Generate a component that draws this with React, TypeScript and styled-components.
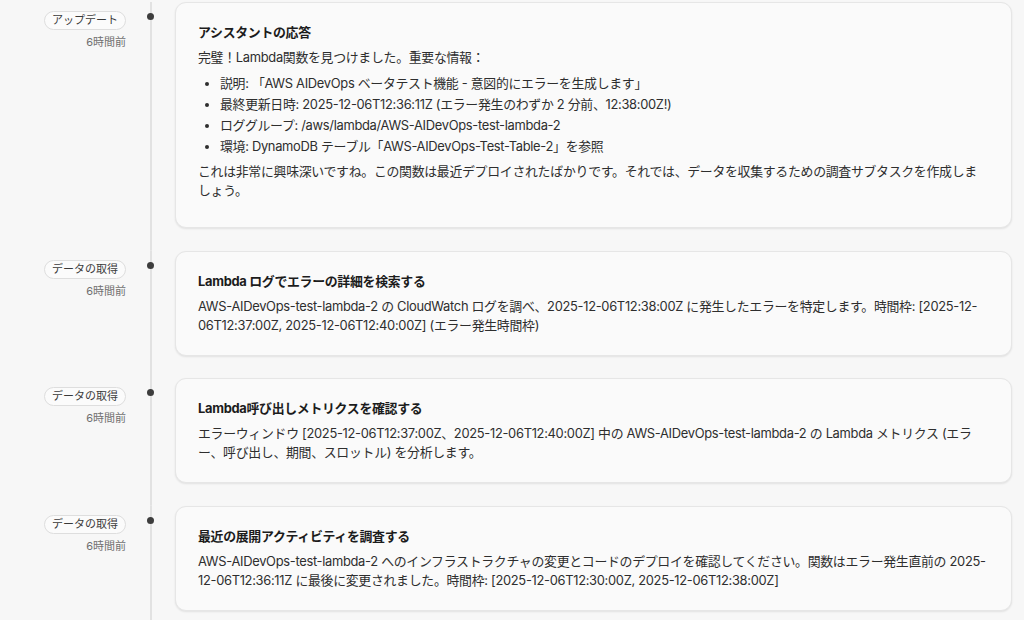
import React from "react"
import styled, { createGlobalStyle } from "styled-components"

const GlobalStyle = createGlobalStyle`
  html, body {
    margin: 0;
    padding: 0;
    background: #f7f7f7;
  }
  body {
    font-family: Inter, "Noto Sans CJK JP", sans-serif;
    color: #2b2b2b;
    -webkit-font-smoothing: antialiased;
  }
`

const Timeline = styled.div`
  display: flex;
  flex-direction: column;
  padding: 2px 12px 0 0;
  min-height: 620px;
  box-sizing: border-box;
`

const Row = styled.div`
  display: flex;
  align-items: stretch;
`

const Meta = styled.div`
  width: 126px;
  flex-shrink: 0;
  display: flex;
  flex-direction: column;
  align-items: flex-end;
  padding-top: 9px;
  box-sizing: border-box;
`

const Badge = styled.span`
  display: inline-block;
  height: 19px;
  line-height: 17px;
  padding: 0 7px;
  box-sizing: border-box;
  border: 1px solid #dedede;
  border-radius: 10px;
  background: #fbfbfb;
  font-size: 11px;
  color: #3a3a3a;
  white-space: nowrap;
`

const Time = styled.span`
  margin-top: 4px;
  font-size: 11px;
  line-height: 16px;
  color: #707070;
`

const Rail = styled.div`
  width: 49px;
  flex-shrink: 0;
  display: flex;
  justify-content: center;
  background: linear-gradient(#e2e2e2, #e2e2e2) center / 2px 100% no-repeat;
`

const Dot = styled.span`
  width: 7px;
  height: 7px;
  margin-top: 11px;
  border-radius: 50%;
  background: #3d3d3d;
`

const CardSlot = styled.div`
  flex: 1;
  padding-bottom: 22.5px;
`

// CJK glyphs run a touch wider than Inter's latin in the source, hence the size/tracking pair
const Card = styled.div`
  background: #fafafa;
  border: 1px solid #e6e6e6;
  border-radius: 11px;
  box-shadow: 0 1px 2px rgba(0, 0, 0, 0.09);
  padding: 20px 22px;
  font-size: 12.9px;
  letter-spacing: -0.3px;
  line-height: 19px;
  line-break: loose;
  color: #2e2e2e;
`

const Title = styled.div`
  font-weight: bold;
  line-height: 20px;
  color: #1c1c1c;
  margin-bottom: 5px;
`

const Paragraph = styled.p`
  margin: 0 0 7px;
`

const Description = styled.p`
  margin: 0;
`

const Bullets = styled.ul`
  margin: 0 0 6px;
  padding-left: 22px;
  list-style: disc;

  li {
    margin-bottom: 2px;
  }
  li:last-child {
    margin-bottom: 0;
  }
`

type Step = {
  badge: string
  time: string
  title: string
  body: React.ReactNode
}

const steps: Step[] = [
  {
    badge: "アップデート",
    time: "6時間前",
    title: "アシスタントの応答",
    body: (
      <>
        <Paragraph>完璧！Lambda関数を見つけました。重要な情報：</Paragraph>
        <Bullets>
          <li>説明: 「AWS AIDevOps ベータテスト機能 - 意図的にエラーを生成します」</li>
          <li>最終更新日時: 2025-12-06T12:36:11Z (エラー発生のわずか 2 分前、12:38:00Z!)</li>
          <li>ロググループ: /aws/lambda/AWS-AIDevOps-test-lambda-2</li>
          <li>環境: DynamoDB テーブル「AWS-AIDevOps-Test-Table-2」を参照</li>
        </Bullets>
        <Paragraph>
          これは非常に興味深いですね。この関数は最近デプロイされたばかりです。それでは、データを収集するための調査サブタスクを作成しましょう。
        </Paragraph>
      </>
    ),
  },
  {
    badge: "データの取得",
    time: "6時間前",
    title: "Lambda ログでエラーの詳細を検索する",
    body: (
      <Description>
        AWS-AIDevOps-test-lambda-2 の CloudWatch ログを調べ、2025-12-06T12:38:00Z
        に発生したエラーを特定します。時間枠: [2025-12-06T12:37:00Z, 2025-12-06T12:40:00Z]
        (エラー発生時間枠)
      </Description>
    ),
  },
  {
    badge: "データの取得",
    time: "6時間前",
    title: "Lambda呼び出しメトリクスを確認する",
    body: (
      <Description>
        エラーウィンドウ [2025-12-06T12:37:00Z、2025-12-06T12:40:00Z] 中の
        AWS-AIDevOps-test-lambda-2 の Lambda メトリクス (エラー、呼び出し、期間、スロットル)
        を分析します。
      </Description>
    ),
  },
  {
    badge: "データの取得",
    time: "6時間前",
    title: "最近の展開アクティビティを調査する",
    body: (
      <Description>
        AWS-AIDevOps-test-lambda-2
        へのインフラストラクチャの変更とコードのデプロイを確認してください。関数はエラー発生直前の
        2025-12-06T12:36:11Z に最後に変更されました。時間枠: [2025-12-06T12:30:00Z,
        2025-12-06T12:38:00Z]
      </Description>
    ),
  },
]

export default function App() {
  return (
    <>
      <GlobalStyle />
      <Timeline lang="ja">
        {steps.map((step, i) => (
          <Row key={i}>
            <Meta>
              <Badge>{step.badge}</Badge>
              <Time>{step.time}</Time>
            </Meta>
            <Rail>
              <Dot />
            </Rail>
            <CardSlot>
              <Card>
                <Title>{step.title}</Title>
                {step.body}
              </Card>
            </CardSlot>
          </Row>
        ))}
      </Timeline>
    </>
  )
}
